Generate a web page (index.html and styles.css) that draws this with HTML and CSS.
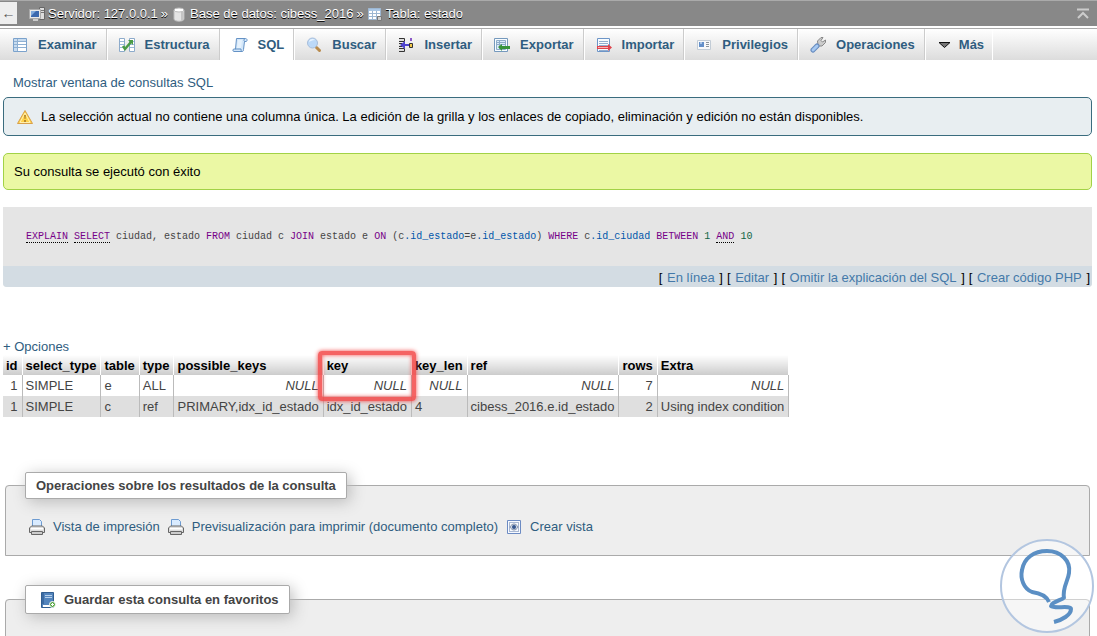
FILE: index.html
```
<!DOCTYPE html>
<html lang="es">
<head>
    <meta charset="utf-8">
    <title>Tabla: estado</title>
    <link rel="stylesheet" href="styles.css">
</head>
<body>
    <header class="serverinfo">
        <button type="button" class="nav-toggle" aria-label="Ocultar panel">←</button>
        <nav class="breadcrumb">
            <svg class="icon" viewBox="0 0 16 16"><path fill="#ddd" stroke="#666" d="M10.5 1.5h5v12h-5z"/><path stroke="#777" d="M11 4.5h4M11 6.5h4"/><path fill="#e8e8e8" stroke="#aaa" d="M.5 3.5h11v9H.5z"/><path fill="#3b68ae" d="M2 5h8v6H2z"/><path fill="#7fa9dc" d="M2 5h5l-5 5z"/><path fill="#ccc" d="M4 13h5v2H4z"/></svg>
            <a href="#">Servidor: 127.0.0.1</a>
            <span>»</span>
            <svg class="icon" viewBox="0 0 16 16"><path fill="#e4e4e4" stroke="#bbb" d="M3 4v9c0 3 10 3 10 0V4z"/><path fill="#c5c5c5" d="M10 6h2.500v8H10z"/><ellipse cx="8" cy="4" rx="5" ry="2" fill="#fff" stroke="#bbb"/></svg>
            <a href="#">Base de datos: cibess_2016</a>
            <span>»</span>
            <svg class="icon" viewBox="0 0 16 16"><path fill="#fff" stroke="#9db7d2" d="M1.500 2.500h12v11h-12z"/><path fill="#a9c6e4" d="M2 3h11v2H2z"/><path stroke="#9db7d2" d="M2 7.500h11M2 10.500h11M5.500 5v8M9.500 5v8"/><path fill="#ccc" stroke="#777" d="M10.500 10.500h4v4h-4z"/></svg>
            <a href="#">Tabla: estado</a>
        </nav>
        <svg class="page-top" viewBox="0 0 12 12"><path fill="none" stroke="#ccc" stroke-width="2" d="M0 1.500h12M1 10l5-5 5 5"/></svg>
    </header>

    <nav class="tabs">
        <a href="#" class="tab">
            <svg class="icon" viewBox="0 0 16 16"><path fill="#fff" stroke="#7ba2cc" d="M1.500 1.500h13v13h-13z"/><path fill="#c8dcf0" d="M2 2h12v2H2zM2 4h3v10H2z"/><path stroke="#8fb0d2" d="M2 4.500h12M2 7.500h12M2 10.500h12M5.500 2v12"/></svg>
            Examinar
        </a>
        <a href="#" class="tab">
            <svg class="icon" viewBox="0 0 16 16"><path fill="#fff" stroke="#8dabcb" d="M.5 1.500h5v13h-5zM10.500 1.500h5v13h-5z"/><path stroke="#9cb9d8" d="M1 4.500h4M1 7.500h4M1 10.500h4M11 4.500h4M11 7.500h4M11 10.500h4"/><path fill="none" stroke="#4b9b46" stroke-width="2.500" d="M4 9l2 3L12 5"/><path fill="#4b9b46" d="M9 3h5v5z"/></svg>
            Estructura
        </a>
        <a href="#" class="tab active">
            <svg class="icon" viewBox="0 0 16 16"><path fill="#d3e7fa" stroke="#6592c5" d="M4.500 1.500h9c2 0 2 3 .5 3h-1.500l-1 8c0 1.500-.5 2-1.500 2H2c-1.500 0-1.500-2.500 0-2.500h1.500z"/><path fill="none" stroke="#6592c5" d="M3 12h6c0 2 .5 2.500 1 2.500M12.500 4.500c-1-1-.5-2.500.5-3"/><path fill="#f4faff" d="M6 3h4l-1 8H5z" opacity=".6"/></svg>
            SQL
        </a>
        <a href="#" class="tab">
            <svg class="icon" viewBox="0 0 16 16"><path stroke="#b98b4d" stroke-width="3" stroke-linecap="round" d="M10.500 10.500l3 3"/><circle cx="6.500" cy="6" r="5" fill="#bcd9f8" stroke="#a8bedb"/><path fill="#e8f4ff" d="M3 5c0-3 4-4 6-2-3 0-4 1-6 2z"/></svg>
            Buscar
        </a>
        <a href="#" class="tab">
            <svg class="icon" viewBox="0 0 16 16"><path fill="#ddd" stroke="#333" d="M1 1.500h5.500v3H1M1 11.500h5.500v3H1M1 6.500h3v3H1"/><path fill="#4d43ce" d="M2 8l5-4v3h4v2H7v3z"/><path fill="#f3c849" stroke="#333" d="M11.500 6.500h3v4h-3z"/><path fill="#8c59c7" d="M12 1h2v3h-2z"/></svg>
            Insertar
        </a>
        <a href="#" class="tab">
            <svg class="icon" viewBox="0 0 16 16"><path fill="#f8fcff" stroke="#7599bd" d="M.5 1.500h13v13H.5z"/><path fill="#dcecf9" stroke="#8eacc9" d="M2.500 3.500h9v9h-9zM3 5.500h8M3 7.500h8M5.500 4v8"/><path fill="#37933b" d="M4 10l4-3v2h8v3H8v2z"/></svg>
            Exportar
        </a>
        <a href="#" class="tab">
            <svg class="icon" viewBox="0 0 16 16"><path fill="#f8fcff" stroke="#6d95c7" d="M1.500 1.500h12v13h-12z"/><path stroke="#91aed0" d="M3 4.500h9M3 6.500h9M3 8.500h9M3 13.500h9"/><path fill="#e0444d" d="M1 9h11V7l4 3.500-4 3.500v-2H1z"/><path stroke="#f7b0b4" d="M2 10.500h10"/></svg>
            Importar
        </a>
        <a href="#" class="tab">
            <svg class="icon" viewBox="0 0 16 16"><path fill="#f7f9fb" stroke="#c2ccd6" d="M1.500 3.500h13v9h-13z"/><path fill="#638fc9" d="M3 5h5v5H3z"/><path fill="#a9c5e8" d="M4 5h2v2H4z"/><path stroke="#8c949c" d="M10 5.500h3M10 7.500h3M10 9.500h3"/></svg>
            Privilegios
        </a>
        <a href="#" class="tab">
            <svg class="icon" viewBox="0 0 16 16"><path fill="#ccc" stroke="#888" d="M8 8L7.500 4 11 .5h2l-2 3 1.500 1.500 3-2v2.500L12 9 9 9z"/><path stroke="#6288bd" stroke-width="5" stroke-linecap="round" d="M3 13l4-4"/><path stroke="#a6c8f1" stroke-width="3" stroke-linecap="round" d="M3 13l4-4"/></svg>
            Operaciones
        </a>
        <a href="#" class="tab">
            <svg class="icon" viewBox="0 0 16 16"><path fill="#777" stroke="#111" d="M2 5.500h11l-5.500 5z"/></svg>
            Más
        </a>
    </nav>

    <main class="content">
        <a href="#" class="query-window">Mostrar ventana de consultas SQL</a>

        <div class="notice">
            <svg class="icon" viewBox="0 0 16 16"><path fill="#ffd24a" stroke="#d9a04a" stroke-linejoin="round" d="M8 1.500l7.500 13H.5z"/><path fill="none" stroke="#fff0b0" d="M8 4l5 9.500H3z"/><path fill="#b98a2c" d="M7 6h2l-.5 4h-1zM7 11h2v2H7z"/></svg>
            <span>La selección actual no contiene una columna única. La edición de la grilla y los enlaces de copiado, eliminación y edición no están disponibles.</span>
        </div>
        <div class="success">Su consulta se ejecutó con éxito</div>

        <section class="sql-box">
            <pre class="sql"><a href="#">EXPLAIN</a> <a href="#">SELECT</a> ciudad, estado <b>FROM</b> ciudad c <b>JOIN</b> estado e <b>ON</b> (c<i>.id_estado</i>=e<i>.id_estado</i>) <b>WHERE</b> c<i>.id_ciudad</i> <b>BETWEEN</b> <em>1</em> <a href="#">AND</a> <em>10</em></pre>
            <div class="tools">
                <span>[ <a href="#">En línea</a> ]</span>
                <span>[ <a href="#">Editar</a> ]</span>
                <span>[ <a href="#">Omitir la explicación del SQL</a> ]</span>
                <span>[ <a href="#">Crear código PHP</a> ]</span>
            </div>
        </section>

        <a href="#" class="options">+ Opciones</a>
        <table class="results">
            <thead>
                <tr>
                    <th>id</th>
                    <th>select_type</th>
                    <th>table</th>
                    <th>type</th>
                    <th>possible_keys</th>
                    <th class="key">key<span class="highlight"></span></th>
                    <th>key_len</th>
                    <th>ref</th>
                    <th>rows</th>
                    <th>Extra</th>
                </tr>
            </thead>
            <tbody>
                <tr>
                    <td class="num">1</td>
                    <td>SIMPLE</td>
                    <td>e</td>
                    <td>ALL</td>
                    <td class="null">NULL</td>
                    <td class="null">NULL</td>
                    <td class="null">NULL</td>
                    <td class="null">NULL</td>
                    <td class="num">7</td>
                    <td class="null">NULL</td>
                </tr>
                <tr>
                    <td class="num">1</td>
                    <td>SIMPLE</td>
                    <td>c</td>
                    <td>ref</td>
                    <td>PRIMARY,idx_id_estado</td>
                    <td>idx_id_estado</td>
                    <td>4</td>
                    <td>cibess_2016.e.id_estado</td>
                    <td class="num">2</td>
                    <td>Using index condition</td>
                </tr>
            </tbody>
        </table>

        <fieldset>
            <legend>Operaciones sobre los resultados de la consulta</legend>
            <div class="operations">
                <a href="#">
                    <svg class="icon" viewBox="0 0 16 16"><path fill="#d9ebff" stroke="#6d9bd1" d="M3.500 8V.5h7l2 2V8z"/><path fill="#ddd" stroke="#666" d="M.5 9l2-2h11l2 2v4.500H.5z"/><path fill="#fff" d="M2 9h12v1.500H2z"/><path fill="#ccc" stroke="#666" d="M2.500 12.500h11v3h-11z"/></svg>
                    Vista de impresión
                </a>
                <a href="#">
                    <svg class="icon" viewBox="0 0 16 16"><path fill="#d9ebff" stroke="#6d9bd1" d="M3.500 8V.5h7l2 2V8z"/><path fill="#ddd" stroke="#666" d="M.5 9l2-2h11l2 2v4.500H.5z"/><path fill="#fff" d="M2 9h12v1.500H2z"/><path fill="#ccc" stroke="#666" d="M2.500 12.500h11v3h-11z"/></svg>
                    Previsualización para imprimir (documento completo)
                </a>
                <a href="#">
                    <svg class="icon" viewBox="0 0 16 16"><path fill="#f7faff" stroke="#6c8bc3" d="M1.500 1.500h13v13h-13z"/><path stroke="#a9b8d2" d="M3 3.500h10M3 12.500h10M3.500 4v8M12.500 4v8"/><path fill="#ccd6e4" stroke="#8794aa" d="M4 8c2-4 6-4 8 0-2 4-6 4-8 0z"/><circle cx="8" cy="8" r="2" fill="#36578f"/></svg>
                    Crear vista
                </a>
            </div>
        </fieldset>

        <fieldset class="bookmark">
            <legend>
                <svg class="icon" viewBox="0 0 16 16"><path fill="#5485bd" stroke="#315e91" d="M1.500 .5h12v15h-12z"/><path fill="#3c6ba2" d="M2 1h2v11H2z"/><path stroke="#b7d1ec" d="M5 3.500h7M5 5.500h7"/><path fill="#fff" d="M3 13h8v2H3z"/><circle cx="12.500" cy="12.500" r="3" fill="#58a646" stroke="#fff"/><path stroke="#fff" d="M12.500 11v3M11 12.500h3"/></svg>
                Guardar esta consulta en favoritos
            </legend>
            <div class="bookmark-body"></div>
        </fieldset>
    </main>

    <svg class="watermark" viewBox="0 0 94 94">
        <circle cx="47" cy="47" r="46" fill="#fff" fill-opacity=".45" stroke="#b3c6e0" stroke-width="2"/>
        <g fill="none" stroke="#5b8fc4" stroke-width="4" stroke-linejoin="round">
            <path d="M49 63C46 56 40 54 32 53C24 50 20 40 22 31C24 19 34 12 47 12C61 12 71 22 69 34C68 43 62 48 64 60"/>
            <path d="M64 59C58 62 51 64 51 67C54 70 71 66 71 70C71 76 62 81 54 83"/>
        </g>
    </svg>
</body>
</html>
```
FILE: styles.css
```
:root {
    --link: #2f5d80;
    --text: #444;
    --border: #aaa;
}

* {
    box-sizing: border-box;
}

body {
    height: 100vh;
    margin: 0;
    overflow: hidden;
    background: #fff;
    color: var(--text);
    font-family: "Liberation Sans", Arial, sans-serif;
    font-size: 13px;
    line-height: 17px;
}

a {
    color: var(--link);
    text-decoration: none;
}

.icon {
    width: 16px;
    height: 16px;
    flex: none;
}

/* Server bar */
.serverinfo {
    display: flex;
    align-items: center;
    height: 26px;
    background: #888;
    border-top: 1px solid #aaa;
}

.nav-toggle {
    width: 17px;
    height: 22px;
    margin-bottom: 2px;
    padding: 0;
    border: 0;
    background: #eee;
    color: #555;
    font-size: 14px;
}

.breadcrumb {
    display: flex;
    align-items: center;
    gap: 3px;
    margin-left: 12px;
    font-size: 13px;
    color: #fff;
    text-shadow: 0 1px 0 #000;
}

.breadcrumb a {
    color: #fff;
}

.page-top {
    width: 12px;
    height: 12px;
    margin-left: auto;
    margin-right: 8px;
}

/* Tabs */
.tabs {
    display: flex;
    height: 32px;
    margin-top: 2px;
    border-top: 1px solid var(--border);
    background: linear-gradient(#fff, #dcdcdc);
}

.tab {
    display: flex;
    align-items: center;
    gap: 10px;
    padding: 0 9px 0 11px;
    border-left: 1px solid #fff;
    border-right: 1px solid #ccc;
    font-weight: bold;
}

.tab:first-child {
    border-left-color: transparent;
}

.tab:last-child {
    gap: 6px;
    padding-right: 8px;
    border-right-color: #fff;
}

.tab.active {
    background: #fff;
}

.content {
    padding: 14px 5px 0 3px;
}

.query-window {
    display: block;
    margin-left: 10px;
}

/* Messages */
.notice,
.success {
    display: flex;
    align-items: center;
    border: 1px solid;
    border-radius: 5px;
    color: #000;
}

.notice {
    gap: 8px;
    margin-top: 6px;
    padding: 10px 13px;
    border-color: #3a6c7e;
    background: #e8eef1;
}

.success {
    margin-top: 17px;
    padding: 9px 10px;
    border-color: #a2d246;
    background: #ebf8a4;
}

/* Query */
.sql-box {
    margin-top: 17px;
    border-radius: 0 0 4px 4px;
    overflow: hidden;
    background: #e5e5e5;
}

.sql {
    margin: 0;
    padding: 21px 23px;
    font-family: "Liberation Mono", Consolas, monospace;
    font-size: 10px;
}

.sql a,
.sql b {
    color: #770088;
    font-weight: normal;
}

.sql a {
    border-bottom: 1px dotted #000;
}

.sql i {
    color: #0055aa;
    font-style: normal;
}

.sql em {
    color: #116644;
    font-style: normal;
}

.tools {
    display: flex;
    justify-content: flex-end;
    gap: 4px;
    padding: 3px 2px 1px;
    background: #d3dce3;
    color: #000;
}

.tools a {
    margin: 0 1px;
    color: #4479a9;
}

/* Results */
.options {
    display: block;
    margin-top: 51px;
}

.results {
    border-collapse: collapse;
}

.results th,
.results td {
    height: 21px;
    padding: 0 4px 0 3px;
    text-align: left;
    white-space: nowrap;
}

.results th {
    height: 20px;
    background: linear-gradient(#fff, #ccc);
    border-right: 1px solid #fff;
    color: #000;
}

.results td {
    border-right: 1px solid #bbb;
}

.results tbody tr:nth-child(even) {
    background: #dfdfdf;
}

.results .num {
    text-align: right;
}

.results .null {
    text-align: right;
    font-style: italic;
}

.results .key {
    position: relative;
}

.highlight {
    position: absolute;
    top: -4px;
    left: -6px;
    right: -5px;
    height: 50px;
    border: 4px solid rgba(243, 72, 72, 0.85);
    border-radius: 4px;
    box-shadow: 0 0 4px #f34848, inset 0 0 4px #f34848;
}

/* Fieldsets */
fieldset {
    margin: 55px 2px 0;
    padding: 0 4px;
    border: 1px solid var(--border);
    border-radius: 4px 4px 0 0;
    background: #eee;
}

legend {
    display: flex;
    align-items: center;
    gap: 8px;
    margin-left: 15px;
    padding: 4px 10px;
    border: 1px solid var(--border);
    border-radius: 2px;
    background: #fff;
    box-shadow: 3px 3px 15px #bbb;
    font-weight: bold;
}

.operations {
    display: flex;
    flex-wrap: wrap;
    gap: 8px;
    padding: 19px 19px 20px;
}

.operations a {
    display: flex;
    align-items: center;
    gap: 8px;
}

.bookmark {
    margin-top: 29px;
}

.bookmark legend {
    padding: 5px 10px 5px 14px;
}

.bookmark-body {
    height: 60px;
}

.watermark {
    position: fixed;
    right: 3px;
    bottom: 3px;
    width: 94px;
    height: 94px;
}
```
